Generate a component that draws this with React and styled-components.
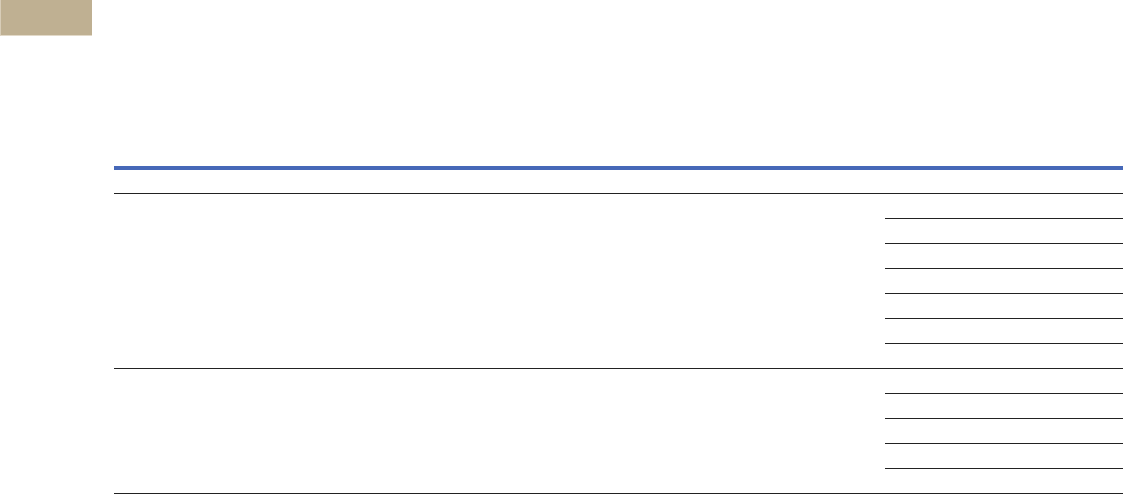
import React from 'react';
import styled, { createGlobalStyle } from 'styled-components';

const GlobalStyle = createGlobalStyle`
  html, body {
    margin: 0;
    padding: 0;
    background: #fff;
    font-family: "Liberation Sans", Arial, sans-serif;
  }
`;

const Page = styled.div`
  width: 1123px;
  height: 494px;
  overflow: hidden;
`;

const Tab = styled.div`
  width: 92px;
  height: 36px;
  background: #bfb092;
  border-left: 1px solid #d8cdb8;
  border-bottom: 1px solid #e2d9c8;
  box-sizing: border-box;
`;

const Table = styled.div`
  margin: 130px 0 0 114px;
  display: flex;
  flex-direction: column;
`;

const HeaderRow = styled.div`
  height: 23px;
  border-top: 4px solid #4668b8;
  border-bottom: 1px solid #222;
`;

const Group = styled.div`
  display: grid;
  grid-template-columns: 771px 1fr;
  border-bottom: 1px solid #222;
`;

const Label = styled.div``;

const SubList = styled.div`
  display: flex;
  flex-direction: column;
`;

const SubRow = styled.div`
  height: 24px;
  border-bottom: ${p => (p.last ? 'none' : '1px solid #222')};
  height: ${p => (p.last ? '24px' : '24px')};
`;

const groups = [7, 5];

export default function App() {
  return (
    <Page>
      <GlobalStyle />
      <Tab />
      <Table>
        <HeaderRow />
        {groups.map((count, g) => (
          <Group key={g}>
            <Label />
            <SubList>
              {Array.from({ length: count }).map((_, i) => (
                <SubRow key={i} last={i === count - 1} />
              ))}
            </SubList>
          </Group>
        ))}
      </Table>
    </Page>
  );
}
